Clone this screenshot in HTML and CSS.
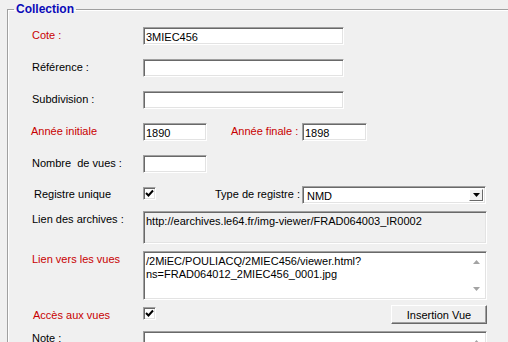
FILE: index.html
```html
<!DOCTYPE html>
<html lang="fr">
<head>
	<title>Collection</title>
	<link rel="stylesheet" href="styles.css">
</head>
<body>

<fieldset class="group">
	<legend>Collection</legend>

	<div class="row">
		<label class="lbl req">Cote :</label>
		<input class="field w-long" value="3MIEC456">
	</div>

	<div class="row">
		<label class="lbl">Référence :</label>
		<input class="field w-long" value="">
	</div>

	<div class="row">
		<label class="lbl">Subdivision :</label>
		<input class="field w-long" value="">
	</div>

	<div class="row">
		<label class="lbl req shift-l">Année initiale</label>
		<input class="field w-short" value="1890">
		<label class="lbl2 req lbl-fin">Année finale :</label>
		<input class="field w-fin" value="1898">
	</div>

	<div class="row">
		<label class="lbl">Nombre&nbsp; de vues :</label>
		<input class="field w-short" value="">
	</div>

	<div class="row row-reg">
		<label class="lbl shift-r">Registre unique</label>
		<span class="check">
			<svg width="9" height="9" viewBox="0 0 9 9"><path d="M1 4 L3.5 6.5 L8 1.5" fill="none" stroke="#000" stroke-width="2"/></svg>
		</span>
		<label class="lbl2 lbl-type">Type de registre :</label>
		<div class="select">
			<span class="select-text">NMD</span>
			<span class="select-btn">
				<svg width="7" height="4" viewBox="0 0 7 4"><path d="M0 0 H7 L3.5 4 Z" fill="#000"/></svg>
			</span>
		</div>
	</div>

	<div class="row row-arch">
		<label class="lbl">Lien des archives :</label>
		<div class="field readonly w-wide">http://earchives.le64.fr/img-viewer/FRAD064003_IR0002</div>
	</div>

	<div class="row row-vues">
		<label class="lbl req">Lien vers les vues</label>
		<div class="field memo w-wide">
			<div class="memo-text">/2MiEC/POULIACQ/2MIEC456/viewer.html?<br>ns=FRAD064012_2MIEC456_0001.jpg</div>
			<div class="scroll">
				<svg width="7" height="4" viewBox="0 0 7 4"><path d="M0 4 H7 L3.5 0 Z" fill="#a3a3a3"/></svg>
				<svg width="7" height="4" viewBox="0 0 7 4"><path d="M0 0 H7 L3.5 4 Z" fill="#a3a3a3"/></svg>
			</div>
		</div>
	</div>

	<div class="row row-acces">
		<label class="lbl req shift-r1">Accès aux vues</label>
		<span class="check">
			<svg width="9" height="9" viewBox="0 0 9 9"><path d="M1 4 L3.5 6.5 L8 1.5" fill="none" stroke="#000" stroke-width="2"/></svg>
		</span>
		<button class="btn">Insertion Vue</button>
	</div>

	<div class="row row-note">
		<label class="lbl">Note :</label>
		<div class="field memo memo-note w-wide">
			<div class="memo-text"></div>
			<div class="scroll">
				<svg width="7" height="4" viewBox="0 0 7 4"><path d="M0 4 H7 L3.5 0 Z" fill="#a3a3a3"/></svg>
			</div>
		</div>
	</div>
</fieldset>

</body>
</html>
```

FILE: styles.css
```css
html, body {
	margin: 0;
	height: 342px;
	overflow: hidden;
	background: #f0f0f0;
	font-family: "Liberation Sans", Arial, sans-serif;
	font-size: 11px;
	color: #000;
}

.group {
	margin: 2px 0 0 7px;
	padding: 11px 0 0 24px;
	width: 480px;
	height: 330px;
	border: 1px solid #a0a0a0;
	border-bottom: none;
	box-shadow: inset 1px 1px 0 #fff;
}

.group legend {
	margin-left: -18px;
	padding: 0 2px;
	font-size: 12px;
	font-weight: bold;
	color: #0a0ab8;
}

.row {
	display: flex;
	align-items: flex-start;
	margin-bottom: 14px;
}

.lbl {
	width: 111px;
	flex: none;
	padding-top: 2px;
	line-height: 13px;
}

.lbl2 {
	flex: none;
	padding-top: 2px;
	line-height: 13px;
}

.req {
	color: #c80000;
}

.shift-l {
	margin-left: -1px;
	width: 112px;
}

.shift-r {
	padding-left: 2px;
	width: 109px;
}

.shift-r1 {
	padding-left: 1px;
	width: 110px;
}

.lbl-fin {
	margin-left: 24px;
	width: 71px;
}

.lbl-type {
	margin-left: 59px;
	width: 87px;
}

.field {
	box-sizing: border-box;
	height: 18px;
	margin: 0;
	padding: 1px 2px 0;
	font: inherit;
	color: #000;
	background: #fff;
	border: 1px solid;
	border-color: #a0a0a0 #fff #fff #a0a0a0;
	box-shadow: inset 1px 1px 0 #696969, inset -1px -1px 0 #e3e3e3;
	outline: none;
}

.w-long { width: 201px; }
.w-short { width: 64px; }
.w-fin { width: 65px; }
.w-wide { width: 344px; }

.check {
	box-sizing: border-box;
	width: 13px;
	height: 13px;
	flex: none;
	margin-top: 1px;
	display: flex;
	align-items: center;
	justify-content: center;
	background: #fff;
	border: 1px solid;
	border-color: #a0a0a0 #fff #fff #a0a0a0;
	box-shadow: inset 1px 1px 0 #696969, inset -1px -1px 0 #e3e3e3;
}

.row-reg {
	margin-top: -1px;
	margin-bottom: 7px;
}

.select {
	box-sizing: border-box;
	width: 184px;
	height: 18px;
	display: flex;
	background: #fff;
	border: 1px solid;
	border-color: #a0a0a0 #fff #fff #a0a0a0;
	box-shadow: inset 1px 1px 0 #696969, inset -1px -1px 0 #e3e3e3;
	padding: 2px;
}

.select-text {
	flex: 1;
	padding: 1px 0 0 2px;
	line-height: 12px;
}

.select-btn {
	box-sizing: border-box;
	width: 14px;
	flex: none;
	display: flex;
	align-items: center;
	justify-content: center;
	background: #f0f0f0;
	border: 1px solid;
	border-color: #fff #696969 #696969 #fff;
}

.row-arch {
	margin-bottom: 7px;
}

.readonly {
	height: 33px;
	background: #f0f0f0;
	padding-top: 3px;
	line-height: 13px;
}

.row-vues {
	margin-bottom: 5px;
}

.memo {
	height: 49px;
	display: flex;
	padding: 2px;
}

.memo-text {
	flex: 1;
	line-height: 13px;
	padding-top: 1px;
}

.scroll {
	width: 15px;
	flex: none;
	display: flex;
	flex-direction: column;
	justify-content: space-between;
	align-items: center;
	padding: 6px 0;
	background: #fff;
}

.row-acces {
	margin-bottom: 7px;
}

.row-acces .check {
	margin-top: 2px;
}

.row-acces .lbl {
	padding-top: 4px;
}

.btn {
	margin-left: 235px;
	box-sizing: border-box;
	width: 96px;
	height: 19px;
	padding: 0;
	font: inherit;
	color: #000;
	background: #f0f0f0;
	border: 1px solid;
	border-color: #fff #696969 #696969 #fff;
	box-shadow: inset -1px -1px 0 #a0a0a0;
}

.row-note .lbl {
	padding-top: 1px;
}

.memo-note {
	height: 30px;
}
```
